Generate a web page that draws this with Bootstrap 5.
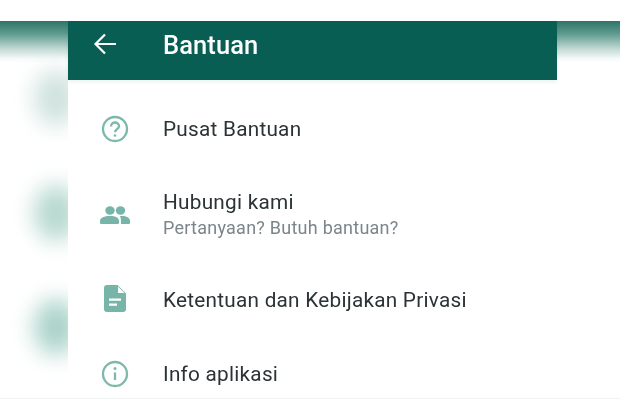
<!DOCTYPE html>
<html lang="en">
<head>
  <meta charset="UTF-8">
  <title>Bantuan</title>
  <link href="https://cdn.jsdelivr.net/npm/bootstrap@5.3.3/dist/css/bootstrap.min.css" rel="stylesheet">
  <style>
    html, body { height: 413px; overflow: hidden; background: #fff; }
    body { font-family: Roboto, "Liberation Sans", sans-serif; padding-top: 21px; }
    .stage { height: 392px; }
    .gutter { overflow: hidden; flex-shrink: 0; }
    .gutter-left { width: 68px; }
    .gutter-right { width: 63px; }
    .band { height: 42px; background: linear-gradient(#2f7468 0%, #5f9a8e 30%, #c5dcd7 68%, #f6fafa 90%, #fff 100%); }
    .blob-stack { padding-top: 7px; }
    .blob { width: 44px; height: 56px; margin-left: 34px; border-radius: 50%; filter: blur(11px); background: #a9d2c8; }
    .blob-1 { background: #cfe2de; }
    .blob-2 { margin-top: 59px; background: #b5d8cf; }
    .blob-3 { margin-top: 58px; }
    .centre-col { width: 489px; flex-shrink: 0; filter: blur(.3px); }
    .appbar { height: 59px; background: #085e53; box-shadow: 0 2px 4px rgba(8, 94, 83, .08); color: #fff; }
    .back-slot { width: 95px; padding-left: 25px; line-height: 0; margin-top: -13px; }
    .appbar-title { font-size: 25.500px; font-weight: 500; letter-spacing: .1px; margin-top: -10px; }
    .menu-row { display: flex; align-items: center; }
    .row-a { height: 56px; margin-top: 21px; }
    .row-b { height: 62px; margin-top: 27px; }
    .row-c { height: 56px; margin-top: 26px; }
    .row-d { height: 40px; margin-top: 26px; }
    .icon-slot { width: 95px; flex-shrink: 0; display: flex; justify-content: center; padding-right: 1px; }
    .doc-icon { margin-top: -3px; }
    .item-title { font-size: 20.750px; line-height: 26px; color: #2b3336; letter-spacing: .25px; }
    .item-sub { font-size: 18px; line-height: 26px; color: #7b868b; letter-spacing: .25px; }
    .foot-line { position: absolute; left: 0; right: 0; top: 398px; height: 1px; background: #f1f3f3; }
  </style>
</head>
<body>
  <div class="stage d-flex">
    <div class="gutter gutter-left">
      <div class="band"></div>
      <div class="blob-stack">
        <div class="blob blob-1"></div>
        <div class="blob blob-2"></div>
        <div class="blob blob-3"></div>
      </div>
    </div>

    <div class="centre-col">
      <div class="appbar d-flex align-items-center">
        <div class="back-slot">
          <svg width="24" height="24" viewBox="0 0 24 24" fill="none" stroke="#fff" stroke-width="2.200">
            <path d="M23 12H2.500M12 2.500 2.500 12l9.500 9.500"/>
          </svg>
        </div>
        <div class="appbar-title">Bantuan</div>
      </div>

      <div class="menu-row row-a">
        <div class="icon-slot">
          <svg width="28" height="28" viewBox="0 0 28 28" fill="none" stroke="#7cb9ab" stroke-width="2.300">
            <circle cx="14" cy="14" r="12"/>
            <path d="M10 11.500c0-2.300 1.800-4 4-4s4 1.700 4 3.800c0 2.800-4 3-4 6"/>
            <circle cx="14" cy="20.500" r="1.300" fill="#7cb9ab" stroke="none"/>
          </svg>
        </div>
        <div class="item-title">Pusat Bantuan</div>
      </div>

      <div class="menu-row row-b">
        <div class="icon-slot">
          <svg width="30" height="18" viewBox="0 0 30 20" fill="#76b5a7" preserveAspectRatio="none">
            <circle cx="10" cy="5" r="4.700"/>
            <circle cx="20.500" cy="5" r="4.700"/>
            <path d="M0 16.500C0 13 4.500 11 10 11s9 2 9 5.500V19a1 1 0 0 1-1 1H1a1 1 0 0 1-1-1z"/>
            <path d="M20 11.200c5.500-.6 10 1.600 10 5V19a1 1 0 0 1-1 1h-8v-3.500c0-2-.3-3.800-1-5.300z"/>
          </svg>
        </div>
        <div>
          <div class="item-title">Hubungi kami</div>
          <div class="item-sub">Pertanyaan? Butuh bantuan?</div>
        </div>
      </div>

      <div class="menu-row row-c">
        <div class="icon-slot">
          <svg class="doc-icon" width="22" height="27" viewBox="0 0 22 27">
            <path fill="#76b5a7" d="M3 0H13.500L22 8.500V24a3 3 0 0 1-3 3H3a3 3 0 0 1-3-3V3a3 3 0 0 1 3-3z"/>
            <path fill="#fff" d="M14 1.500V8h6.500zM5 13.500h12v2.200H5zM5 18.500h8v2.200H5z"/>
          </svg>
        </div>
        <div class="item-title">Ketentuan dan Kebijakan Privasi</div>
      </div>

      <div class="menu-row row-d">
        <div class="icon-slot">
          <svg width="28" height="28" viewBox="0 0 28 28" fill="none" stroke="#7cb9ab" stroke-width="2.300">
            <circle cx="14" cy="14" r="12"/>
            <path d="M14 12.500v7.500"/>
            <circle cx="14" cy="8.500" r="1.500" fill="#7cb9ab" stroke="none"/>
          </svg>
        </div>
        <div class="item-title">Info aplikasi</div>
      </div>
    </div>

    <div class="gutter gutter-right">
      <div class="band"></div>
    </div>
  </div>
  <div class="foot-line"></div>
</body>
</html>
